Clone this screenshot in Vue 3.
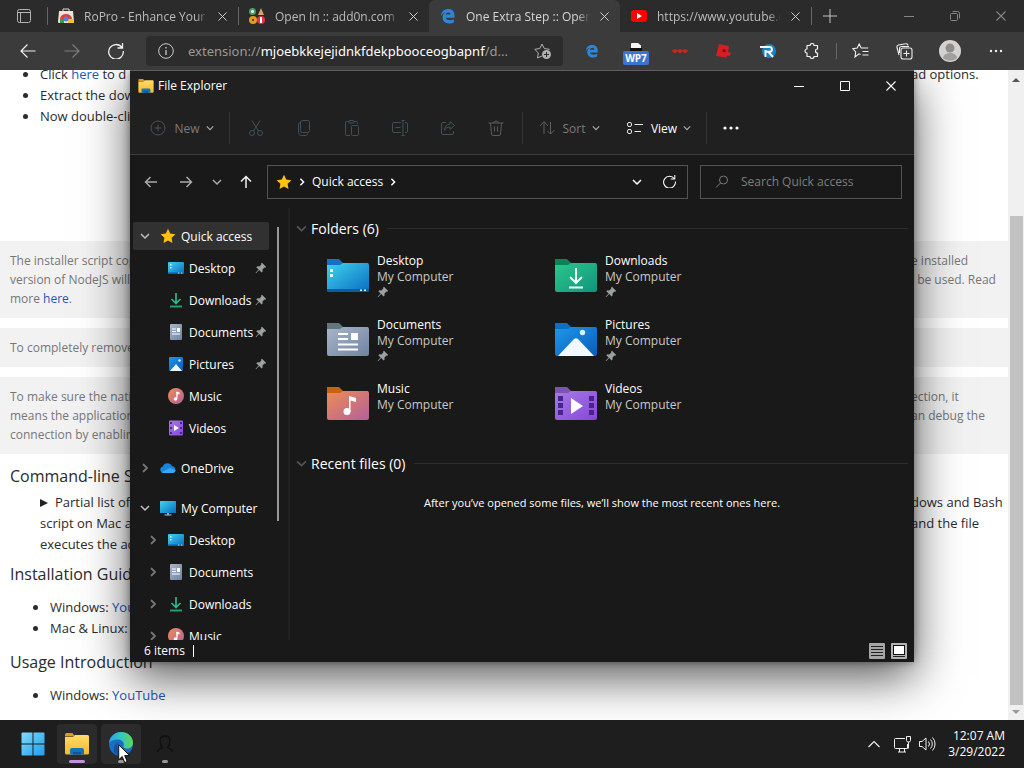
<template>
	<div class="desktop">
		<svg class="sprite" aria-hidden="true">
			<defs>
				<linearGradient id="g-desk" x1="0" y1="0" x2="1" y2="1">
					<stop offset="0" stop-color="#3fd4f0" />
					<stop offset="1" stop-color="#0a6cc0" />
				</linearGradient>
				<linearGradient id="g-down" x1="0" y1="0" x2="1" y2="1">
					<stop offset="0" stop-color="#2cc78c" />
					<stop offset="1" stop-color="#10937c" />
				</linearGradient>
				<linearGradient id="g-doc" x1="0" y1="0" x2="1" y2="1">
					<stop offset="0" stop-color="#a9b6c9" />
					<stop offset="1" stop-color="#6f83a3" />
				</linearGradient>
				<linearGradient id="g-pic" x1="0" y1="0" x2="1" y2="1">
					<stop offset="0" stop-color="#1e97ea" />
					<stop offset="1" stop-color="#0b5bb8" />
				</linearGradient>
				<linearGradient id="g-music" x1="0" y1="0" x2="1" y2="1">
					<stop offset="0" stop-color="#f08c55" />
					<stop offset="1" stop-color="#b0619a" />
				</linearGradient>
				<linearGradient id="g-video" x1="0" y1="0" x2="1" y2="1">
					<stop offset="0" stop-color="#a67be6" />
					<stop offset="1" stop-color="#8746d8" />
				</linearGradient>
				<linearGradient id="g-win" x1="0" y1="0" x2="1" y2="1">
					<stop offset="0" stop-color="#7fdcfb" />
					<stop offset="1" stop-color="#1f9cec" />
				</linearGradient>
				<linearGradient id="g-edge" x1="0" y1="0" x2="1" y2="0">
					<stop offset="0" stop-color="#2aa5e4" />
					<stop offset="0.5" stop-color="#35c4c4" />
					<stop offset="1" stop-color="#62d84e" />
				</linearGradient>
				<linearGradient id="g-folder" x1="0" y1="0" x2="0" y2="1">
					<stop offset="0" stop-color="#ffdc68" />
					<stop offset="1" stop-color="#f5b92c" />
				</linearGradient>
			</defs>

			<symbol id="s-desktop" viewBox="0 0 16 16">
				<rect y="2" width="16" height="12" rx="1" fill="url(#g-desk)" />
				<path d="M2 4h1.500v1.500H2zM2 7h1.500v1.500H2z" fill="#d8f7ff" />
				<path d="M0 12.500h16V13a1 1 0 0 1-1 1H1a1 1 0 0 1-1-1z" fill="#0a5ca8" />
				<path d="M10 12.500h1.500v1H10zM13 12.500h1.500v1H13z" fill="#a9e6ff" />
			</symbol>
			<symbol id="s-downloads" viewBox="0 0 16 16">
				<path d="M8 1v10M3.500 7 8 11.500 12.500 7" fill="none" stroke="#2fb68e" stroke-width="1.700" />
				<path d="M2 14.500h12" stroke="#1f9f6e" stroke-width="2" />
			</symbol>
			<symbol id="s-documents" viewBox="0 0 16 16">
				<rect x="2" width="12" height="16" rx="1" fill="url(#g-doc)" />
				<path d="M4 5h4M4 7.500h4M4 10h8" stroke="#fff" stroke-width="1.200" />
				<path d="M9 4h3v4H9z" fill="#fff" />
			</symbol>
			<symbol id="s-pictures" viewBox="0 0 16 16">
				<rect x="1" y="1" width="14" height="14" rx="1" fill="url(#g-pic)" />
				<path d="M2 15l6-7 6 7z" fill="#f4faff" />
				<circle cx="11.500" cy="4.500" r="1.200" fill="#d6f0ff" />
			</symbol>
			<symbol id="s-music" viewBox="0 0 16 16">
				<circle cx="8" cy="8" r="8" fill="url(#g-music)" />
				<path d="M8.500 3.500l3 1v2l-2-.7v5" fill="#fff" />
				<path d="M8.800 4v7" stroke="#fff" stroke-width="1" />
				<circle cx="7.500" cy="11" r="1.800" fill="#fff" />
			</symbol>
			<symbol id="s-videos" viewBox="0 0 16 16">
				<rect x="1" y="0.500" width="14" height="15" rx="1" fill="url(#g-video)" />
				<path d="M2 2h2v2H2zM2 7h2v2H2zM2 12h2v2H2zM12 2h2v2h-2zM12 7h2v2h-2zM12 12h2v2h-2z" fill="#4a2796" />
				<path d="M6 5l5 3-5 3z" fill="#fff" />
			</symbol>
			<symbol id="s-star" viewBox="0 0 16 16">
				<path d="M8 .8l2.200 4.700 5.200.7-3.800 3.600.9 5.200L8 12.500 3.500 15l.9-5.200L.6 6.200l5.200-.7z" fill="#ffc20d" />
			</symbol>
			<symbol id="s-cloud" viewBox="0 0 16 16">
				<path d="M3.500 13a3.300 3.300 0 0 1-.7-6.500A5 5 0 0 1 12 6.300 3.400 3.400 0 0 1 12.700 13z" fill="#1a84dd" />
				<path d="M1.500 12.300 10 8l5.800 2.500A3.200 3.200 0 0 1 12.700 13H3.500a3 3 0 0 1-2-.7z" fill="#36a9f2" />
			</symbol>
			<symbol id="s-computer" viewBox="0 0 16 16">
				<rect y="1" width="16" height="12" rx="0.500" fill="url(#g-desk)" />
				<path d="M7 13h2v2H7z" fill="#6aaecb" />
				<path d="M4.500 15h7" stroke="#a9cbd8" stroke-width="1" />
			</symbol>
			<symbol id="s-pin" viewBox="0 0 12 12">
				<path d="M7 .8 11.200 5l-1 .8-.7-.2-2 2 .1 1.900-1 1L4.200 8 1 11.200.6 10.800 3.700 7.600 1.300 5.200l1-1 2 .2 2-2L6 1.700z" fill="#9aa0a4" />
			</symbol>
			<symbol id="s-down" viewBox="0 0 10 10">
				<path d="M1 3l4 4 4-4" fill="none" stroke="currentColor" stroke-width="1.500" />
			</symbol>
			<symbol id="s-right" viewBox="0 0 10 10">
				<path d="M3 1l4 4-4 4" fill="none" stroke="currentColor" stroke-width="1.800" />
			</symbol>
			<symbol id="s-close" viewBox="0 0 10 10">
				<path d="M0.500 0.500l9 9M9.500 0.500l-9 9" fill="none" stroke="currentColor" stroke-width="1.100" />
			</symbol>
			<symbol id="s-arrow" viewBox="0 0 16 16">
				<path d="M15.500 8H1M7.500 1.500 1 8l6.500 6.500" fill="none" stroke="currentColor" stroke-width="1.200" />
			</symbol>
			<symbol id="s-back" viewBox="0 0 14 14">
				<path d="M13 7H1.500M6.500 2l-5 5 5 5" fill="none" stroke="currentColor" stroke-width="1.500" />
			</symbol>
			<symbol id="s-reload" viewBox="0 0 16 16">
				<path d="M14 4.600A7.300 7.300 0 1 0 15.300 8M14.500 0v5H9.500" fill="none" stroke="currentColor" stroke-width="1.300" />
			</symbol>
			<symbol id="s-ie" viewBox="0 0 16 16">
				<path
					d="M1 8.500C1.200 3 4.500 1 8.200 1c4 0 6.300 2.700 6.300 6.300v2.400H5.800c.3 1.700 2 2.500 4.100 2.500 1.600 0 2.900-.4 4-1v3.200c-1.300.7-2.900 1-4.600 1-3.900 0-6.700-2.200-6.700-6 0-2.300 1.100-4.200 3-5.200C3.300 4.500 1.800 6.200 1 8.500zm4.800-1.900h4.900c0-1.500-1-2.200-2.300-2.200s-2.400.9-2.600 2.200z"
					fill="#2f86d8"
				/>
			</symbol>

			<symbol id="f-desktop" viewBox="0 0 43 36">
				<path d="M1 2h12l4 4h25v10H1z" fill="#1272c6" />
				<path d="M1 8h13l3-2h24a2 2 0 0 1 2 2v25a2 2 0 0 1-2 2H3a2 2 0 0 1-2-2z" fill="url(#g-desk)" />
				<path d="M1 32h42v1a2 2 0 0 1-2 2H3a2 2 0 0 1-2-2z" fill="#0b5ba5" />
				<path d="M4 12h3v3H4zM4 17h3v3H4zM34 32.500h2v1.500h-2zM38 32.500h2v1.500h-2z" fill="#e4faff" />
			</symbol>
			<symbol id="f-downloads" viewBox="0 0 43 36">
				<path d="M1 2h12l4 4h25v10H1z" fill="#0c8256" />
				<path d="M1 8h13l3-2h24a2 2 0 0 1 2 2v25a2 2 0 0 1-2 2H3a2 2 0 0 1-2-2z" fill="url(#g-down)" />
				<path d="M22 11v14M16 20l6 6 6-6M15 30.500h14" fill="none" stroke="#e9fff6" stroke-width="2" />
			</symbol>
			<symbol id="f-documents" viewBox="0 0 43 36">
				<path d="M1 2h12l4 4h25v10H1z" fill="#65757e" />
				<path d="M1 8h13l3-2h24a2 2 0 0 1 2 2v25a2 2 0 0 1-2 2H3a2 2 0 0 1-2-2z" fill="url(#g-doc)" />
				<path d="M12 13h10M12 18h10M12 23.500h20M12 28.500h20" stroke="#fff" stroke-width="2" />
				<path d="M25 12h7v7h-7z" fill="#fff" />
			</symbol>
			<symbol id="f-pictures" viewBox="0 0 43 36">
				<path d="M1 2h12l4 4h25v10H1z" fill="#0b6fc4" />
				<path d="M1 8h13l3-2h24a2 2 0 0 1 2 2v25a2 2 0 0 1-2 2H3a2 2 0 0 1-2-2z" fill="url(#g-pic)" />
				<path d="M4 35 20 18q2-1.500 4 0l16 17z" fill="#f2f8ff" />
				<circle cx="28.500" cy="11.500" r="2.700" fill="#d9f1ff" />
			</symbol>
			<symbol id="f-music" viewBox="0 0 43 36">
				<path d="M1 2h12l4 4h25v10H1z" fill="#c8620f" />
				<path d="M1 8h13l3-2h24a2 2 0 0 1 2 2v25a2 2 0 0 1-2 2H3a2 2 0 0 1-2-2z" fill="url(#g-music)" />
				<path d="M23 11l7 2v4l-5.500-1.500V27H23z" fill="#fff" />
				<circle cx="21" cy="26.500" r="3.500" fill="#fff" />
			</symbol>
			<symbol id="f-videos" viewBox="0 0 43 36">
				<path d="M1 2h12l4 4h25v10H1z" fill="#7a55b5" />
				<path d="M1 8h13l3-2h24a2 2 0 0 1 2 2v25a2 2 0 0 1-2 2H3a2 2 0 0 1-2-2z" fill="url(#g-video)" />
				<path
					d="M4 11h5v5H4zM4 18h5v5H4zM4 25h5v5H4zM35 11h5v5h-5zM35 18h5v5h-5zM35 25h5v5h-5z"
					fill="#462488"
				/>
				<path d="M17 13l12 8-12 8z" fill="#fff" />
			</symbol>
			<symbol id="s-explorer" viewBox="0 0 24 22">
				<path d="M0 1.500A1.500 1.500 0 0 1 1.500 0h6L10 3.500H0z" fill="#d99a1e" />
				<path d="M0 4h8l2-2h12.500A1.500 1.500 0 0 1 24 3.500V20a1.500 1.500 0 0 1-1.500 1.500h-21A1.500 1.500 0 0 1 0 20z" fill="url(#g-folder)" />
				<path d="M5 21.500V17a2 2 0 0 1 2-2h10a2 2 0 0 1 2 2v4.500z" fill="#1573be" />
				<path d="M8 19h8v2.500H8z" fill="#0d5593" />
			</symbol>
		</svg>

		<header class="browser">
			<div class="tabs">
				<button class="tab-menu" aria-label="Tab actions">
					<svg width="14" height="14" viewBox="0 0 14 14" fill="none" stroke="#b5b5b5">
						<rect x="0.500" y="0.500" width="13" height="13" rx="2" />
						<path d="M0.500 3.500h13M3.500 3.500v10" />
					</svg>
				</button>
				<div v-for="tab in tabs" :key="tab.title" class="tab" :class="{ active: tab.active }">
					<svg v-if="tab.icon === 'store'" class="favicon" viewBox="0 0 16 16">
						<path d="M5 3V1h6v2" fill="none" stroke="#ddd" />
						<path d="M1 3h14l1 11a1 1 0 0 1-1 1H1a1 1 0 0 1-1-1z" fill="#e9e4df" />
						<path d="M2 11a6 5 0 0 1 12 0z" fill="#d9443a" />
						<path d="M10 11h6v4h-6z" fill="#f2c230" />
						<path d="M2 11h4v4H2z" fill="#3e9a4c" />
						<circle cx="8" cy="11" r="2.500" fill="#4a86e0" />
					</svg>
					<svg v-else-if="tab.icon === 'add0n'" class="favicon" viewBox="0 0 16 16">
						<circle cx="3.500" cy="3.500" r="2.500" fill="#fff" stroke="#4a9f6b" stroke-width="2" />
						<path d="M12 0l3 7H9z" fill="#d8a36a" />
						<circle cx="4" cy="12" r="2.500" fill="none" stroke="#e89a20" stroke-width="3" />
						<circle cx="12" cy="12" r="4" fill="#e23440" />
						<path d="M12 9v6" stroke="#fff" stroke-width="2" />
					</svg>
					<svg v-else-if="tab.icon === 'ie'" class="favicon"><use href="#s-ie" /></svg>
					<svg v-else class="favicon" viewBox="0 0 16 16">
						<rect y="2" width="16" height="12" rx="3" fill="#f00" />
						<path d="M6 5l5 3-5 3z" fill="#fff" />
					</svg>
					<span class="tab-title">{{ tab.title }}</span>
					<button class="tab-close" aria-label="Close tab">
						<svg width="9" height="9"><use href="#s-close" /></svg>
					</button>
				</div>
				<button class="new-tab" aria-label="New tab">
					<svg width="14" height="14" viewBox="0 0 14 14"><path d="M7 0v14M0 7h14" stroke="#c4c4c4" /></svg>
				</button>
				<div class="browser-controls">
					<button aria-label="Minimize browser">
						<svg width="10" height="10" viewBox="0 0 10 10"><path d="M0 5.500h10" stroke="currentColor" /></svg>
					</button>
					<button aria-label="Restore browser">
						<svg width="10" height="10" viewBox="0 0 10 10" fill="none" stroke="currentColor">
							<rect x="0.500" y="2.500" width="7" height="7" rx="1" />
							<path d="M2.500.5h5a2 2 0 0 1 2 2v5" />
						</svg>
					</button>
					<button aria-label="Close browser">
						<svg width="10" height="10"><use href="#s-close" /></svg>
					</button>
				</div>
			</div>

			<div class="toolbar">
				<button aria-label="Back"><svg width="16" height="16"><use href="#s-arrow" /></svg></button>
				<button class="dim" aria-label="Forward">
					<svg class="flip" width="16" height="16"><use href="#s-arrow" /></svg>
				</button>
				<button aria-label="Refresh"><svg width="16" height="16"><use href="#s-reload" /></svg></button>
				<div class="address">
					<svg width="16" height="16" viewBox="0 0 16 16" fill="none" stroke="#c9c9c9">
						<circle cx="8" cy="8" r="7.300" />
						<path d="M8 7v5M8 4v1.500" stroke-width="1.300" />
					</svg>
					<span class="url">extension://<b>mjoebkkejejidnkfdekpbooceogbapnf</b>/d...</span>
					<button class="add-fav" aria-label="Add to favorites">
						<svg width="18" height="18" viewBox="0 0 18 18" fill="none" stroke="#b0b0b0">
							<path d="M8 14l-4.500 2 .8-5L.8 7.300l5-.8L8 2l2.300 4.500 5 .8-1 1" />
							<circle cx="12.500" cy="12.500" r="4.500" fill="#b0b0b0" stroke="none" />
							<path d="M12.500 10v5M10 12.500h5" stroke="#2b2b2b" />
						</svg>
					</button>
				</div>
				<button aria-label="Open in IE"><svg width="14" height="14"><use href="#s-ie" /></svg></button>
				<button class="wp" aria-label="WP7 extension">
					<svg width="14" height="8" viewBox="0 0 14 8">
						<path d="M2 5V1a1 1 0 0 1 1-1h6l3 2.500V5z" fill="#f4f4f4" />
						<path d="M1 5h12v3H1z" fill="#111" />
					</svg>
					<span class="badge">WP7</span>
				</button>
				<button aria-label="Dots extension">
					<svg width="16" height="6" viewBox="0 0 16 6">
						<path d="M0 3h16" stroke="#b32018" stroke-width="2" />
						<circle cx="3" cy="3" r="2" fill="#c5281c" />
						<circle cx="8" cy="3" r="2" fill="#c5281c" />
						<circle cx="13" cy="3" r="2" fill="#c5281c" />
					</svg>
				</button>
				<button aria-label="Roblox extension">
					<svg width="16" height="16" viewBox="0 0 16 16">
						<path d="M3 1l10 2-.8 6 3 1-1.700 3-2.500-.6-.5 2L0 13z" fill="#d81e24" />
						<path d="M7 6l3 .7-.6 2.600-3-.6z" fill="#7c1014" />
					</svg>
				</button>
				<button aria-label="RoPro extension">
					<svg width="16" height="16" viewBox="0 0 16 16">
						<circle cx="9" cy="8" r="7" fill="#1583c9" />
						<path d="M0 4h9.500a2.400 2.400 0 0 1 0 4.800H6M5.500 7v7M8.500 9l4.500 5" fill="none" stroke="#f4f4f4" stroke-width="2" />
					</svg>
				</button>
				<button aria-label="Extensions">
					<svg width="16" height="16" viewBox="0 0 16 16" fill="none" stroke="currentColor" stroke-width="1.200">
						<path
							d="M3 2.500h3a2 2 0 0 1 4 0h3.500V6a2 2 0 0 0 0 4v3.500H10a2 2 0 0 1-4 0H3V10a2 2 0 0 1 0-4z"
							stroke-linejoin="round"
						/>
					</svg>
				</button>
				<i class="tool-sep"></i>
				<button aria-label="Favorites">
					<svg width="17" height="16" viewBox="0 0 17 16" fill="none" stroke="currentColor" stroke-width="1.100">
						<path d="M8.500 11.500l-1.500-.7L3 14l.7-5L.8 5.700l4.400-.6L7.200 1l2 4h7M10.500 8.500h6M10.500 12h6" />
					</svg>
				</button>
				<button aria-label="Collections">
					<svg width="17" height="17" viewBox="0 0 17 17" fill="none" stroke="currentColor" stroke-width="1.100">
						<rect x="5" y="5" width="11" height="11" rx="2" />
						<path d="M10.500 7.500v6M7.500 10.500h6M3 12L1 4.500A2 2 0 0 1 2.500 2l7-1.200A2 2 0 0 1 12 2.500M3.500 10V5.500a2 2 0 0 1 2-2H13" />
					</svg>
				</button>
				<button class="profile" aria-label="Profile">
					<svg width="22" height="22" viewBox="0 0 22 22">
						<circle cx="11" cy="11" r="11" fill="#d4d2d0" />
						<circle cx="11" cy="8" r="4.500" fill="#8f8d8b" />
						<path d="M4 18a7 5 0 0 1 14 0 10 10 0 0 1-14 0z" fill="#a19f9d" />
					</svg>
				</button>
				<button aria-label="Settings and more">
					<svg width="14" height="4" viewBox="0 0 14 4" fill="currentColor">
						<circle cx="2" cy="2" r="1.200" /><circle cx="7" cy="2" r="1.200" /><circle cx="12" cy="2" r="1.200" />
					</svg>
				</button>
			</div>
		</header>

		<main class="viewport">
			<article class="page">
				<ul class="steps">
					<li><span>Click <a href="#">here</a> to d</span><span>ad options.</span></li>
					<li><span>Extract the dow</span></li>
					<li><span>Now double-cli</span></li>
				</ul>
				<div v-for="(note, n) in notes" :key="n" class="note">
					<p v-for="(line, i) in note" :key="i" class="line">
						<span>{{ line.left }}<a v-if="line.link" href="#">{{ line.link }}</a>{{ line.link ? '.' : '' }}</span>
						<span>{{ line.right }}</span>
					</p>
				</div>
				<h2 class="first">Command-line S</h2>
				<div class="details">
					<p class="line"><span><i class="marker"></i>Partial list of</span><span>dows and Bash</span></p>
					<p class="line"><span>script on Mac a</span><span>and the file</span></p>
					<p class="line"><span>executes the ac</span></p>
				</div>
				<h2>Installation Guid</h2>
				<ul class="videos">
					<li><span>Windows: <a href="#">You</a></span></li>
					<li><span>Mac &amp; Linux:</span></li>
				</ul>
				<h2 class="usage">Usage Introduction</h2>
				<ul class="videos">
					<li><span>Windows: <a href="#">YouTube</a></span></li>
				</ul>
			</article>
			<div class="scrollbar">
				<i class="up"></i>
				<i class="thumb"></i>
				<i class="dn"></i>
			</div>

			<section class="explorer" aria-label="File Explorer">
				<div class="titlebar">
					<svg width="16" height="14"><use href="#s-explorer" /></svg>
					<h1>File Explorer</h1>
					<div class="win-controls">
						<button aria-label="Minimize">
							<svg width="10" height="10" viewBox="0 0 10 10"><path d="M0 5.500h10" stroke="currentColor" /></svg>
						</button>
						<button aria-label="Maximize">
							<svg width="10" height="10" viewBox="0 0 10 10"><path d="M.5.500h9v9h-9z" fill="none" stroke="currentColor" /></svg>
						</button>
						<button aria-label="Close"><svg width="10" height="10"><use href="#s-close" /></svg></button>
					</div>
				</div>

				<div class="commands">
					<button class="cmd new">
						<svg width="16" height="16" viewBox="0 0 16 16" fill="none" stroke="#45525c">
							<circle cx="8" cy="8" r="7" />
							<path d="M8 4.500v7M4.500 8h7" />
						</svg>
						New
						<svg class="chev" width="8" height="8"><use href="#s-down" /></svg>
					</button>
					<i class="cmd-sep"></i>
					<button class="tool" aria-label="Cut">
						<svg width="16" height="16" viewBox="0 0 16 16">
							<path d="M4 .5l6.500 10.500M12 .5 5.500 11" />
							<circle cx="4" cy="13" r="2.500" /><circle cx="12" cy="13" r="2.500" />
						</svg>
					</button>
					<button class="tool" aria-label="Copy">
						<svg width="16" height="16" viewBox="0 0 16 16">
							<rect x="4.500" y=".5" width="9" height="12" rx="2" />
							<path d="M4.500 2.500a2 2 0 0 0-2 2v8a3 3 0 0 0 3 3h4a2 2 0 0 0 2-2" />
						</svg>
					</button>
					<button class="tool" aria-label="Paste">
						<svg width="16" height="16" viewBox="0 0 16 16">
							<path d="M6 15.500H2.500a1 1 0 0 1-1-1v-12a1 1 0 0 1 1-1H5M10 1.500h2.500a1 1 0 0 1 1 1V4" />
							<rect x="5" y=".5" width="5" height="2.500" rx="1" />
							<rect x="7.500" y="5.500" width="7" height="10" rx="1" />
						</svg>
					</button>
					<button class="tool" aria-label="Rename">
						<svg width="16" height="16" viewBox="0 0 16 16">
							<path d="M9 2.500H2a1.500 1.500 0 0 0-1.500 1.500v7A1.500 1.500 0 0 0 2 12.500h7M13 2.500h1A1.500 1.500 0 0 1 15.500 4v7a1.500 1.500 0 0 1-1.500 1.500h-1M11 .5v15M9.500.5h3M9.500 15.500h3M3.500 7.500h5" />
						</svg>
					</button>
					<button class="tool" aria-label="Share">
						<svg width="16" height="16" viewBox="0 0 16 16">
							<path d="M6 2.500H3A1.500 1.500 0 0 0 1.500 4v9A1.500 1.500 0 0 0 3 14.500h9a1.500 1.500 0 0 0 1.500-1.500v-2M10 1.500l4.500 4-4.500 4V7C7 7 5.500 8.500 4.500 10.500 4.500 7 6.500 4.500 10 4z" />
						</svg>
					</button>
					<button class="tool grey" aria-label="Delete">
						<svg width="16" height="16" viewBox="0 0 16 16">
							<path d="M.5 3h15M5.500 3a2.500 2 0 0 1 5 0M2.500 3l1 11a1.500 1.500 0 0 0 1.500 1.500h6a1.500 1.500 0 0 0 1.500-1.500l1-11M6.500 6.500v5M9.500 6.500v5" />
						</svg>
					</button>
					<i class="cmd-sep"></i>
					<button class="cmd sort">
						<svg width="16" height="16" viewBox="0 0 16 16" fill="none" stroke="#5a5f62">
							<path d="M5 14V2M1 6l4-4.500L9 6M11.500 2v12M8.500 11l3 3 4-4" />
						</svg>
						Sort
						<svg class="chev" width="8" height="8"><use href="#s-down" /></svg>
					</button>
					<button class="cmd view">
						<svg width="16" height="16" viewBox="0 0 16 16" fill="none" stroke="#e8e8e8">
							<rect x=".5" y="2.500" width="4" height="4" rx="1.500" />
							<rect x=".5" y="9.500" width="4" height="4" rx="1.500" />
							<path d="M7.500 4.500H16M7.500 11.500h6.500" />
						</svg>
						View
						<svg class="chev" width="8" height="8"><use href="#s-down" /></svg>
					</button>
					<i class="cmd-sep"></i>
					<button class="more" aria-label="See more">
						<svg width="16" height="4" viewBox="0 0 16 4" fill="currentColor">
							<circle cx="2" cy="2" r="1.600" /><circle cx="8" cy="2" r="1.600" /><circle cx="14" cy="2" r="1.600" />
						</svg>
					</button>
				</div>

				<div class="navrow">
					<button class="go" aria-label="Back"><svg width="14" height="14"><use href="#s-back" /></svg></button>
					<button class="go fwd" aria-label="Forward"><svg width="14" height="14"><use href="#s-back" /></svg></button>
					<button class="go small" aria-label="Recent locations"><svg width="10" height="10"><use href="#s-down" /></svg></button>
					<button class="go up-dir" aria-label="Up"><svg width="14" height="14"><use href="#s-back" /></svg></button>
					<div class="crumbs">
						<svg width="16" height="16"><use href="#s-star" /></svg>
						<svg width="8" height="8"><use href="#s-right" /></svg>
						<a href="#">Quick access</a>
						<svg width="8" height="8"><use href="#s-right" /></svg>
						<button class="history" aria-label="Previous locations"><svg width="10" height="10"><use href="#s-down" /></svg></button>
						<button aria-label="Refresh folder"><svg width="13" height="13"><use href="#s-reload" /></svg></button>
					</div>
					<label class="search">
						<svg width="14" height="14" viewBox="0 0 14 14" fill="none" stroke="#7a7a7a">
							<circle cx="8.500" cy="5" r="4" />
							<path d="M5.500 8 1 12.500" />
						</svg>
						<input type="text" placeholder="Search Quick access" aria-label="Search Quick access" />
					</label>
				</div>

				<div class="body">
					<nav class="tree">
						<button
							v-for="item in tree"
							:key="item.id"
							class="node"
							:class="{ child: item.child, selected: item.selected, spaced: item.spaced }"
						>
							<svg class="twisty" :class="{ open: item.open }">
								<use v-if="item.arrow" :href="'#s-' + item.arrow" />
							</svg>
							<svg class="node-icon"><use :href="'#s-' + item.icon" /></svg>
							<span>{{ item.name }}</span>
							<svg v-if="item.pinned" class="node-pin"><use href="#s-pin" /></svg>
						</button>
						<i class="tree-scroll"></i>
					</nav>

					<div class="files">
						<h2 class="group">
							<svg width="11" height="11"><use href="#s-down" /></svg>
							Folders (6)
						</h2>
						<div class="tiles">
							<a v-for="folder in folders" :key="folder.name" class="tile" href="#">
								<svg class="tile-icon"><use :href="'#f-' + folder.name.toLowerCase()" /></svg>
								<span class="tile-text">
									<span>{{ folder.name }}</span>
									<span class="where">My Computer</span>
									<svg v-if="folder.pinned" class="tile-pin"><use href="#s-pin" /></svg>
								</span>
							</a>
						</div>
						<h2 class="group">
							<svg width="11" height="11"><use href="#s-down" /></svg>
							Recent files (0)
						</h2>
						<p class="empty">After you’ve opened some files, we’ll show the most recent ones here.</p>
					</div>
				</div>

				<footer class="status">
					<span class="count">6 items</span>
					<button aria-label="Details view">
						<svg width="16" height="16" viewBox="0 0 16 16">
							<rect width="16" height="16" rx="1" fill="#a6a6a6" />
							<path d="M2 3.500h12M2 6.500h12M2 9.500h12M2 12.500h12" stroke="#222" />
						</svg>
					</button>
					<button aria-label="Large icons view">
						<svg width="16" height="16" viewBox="0 0 16 16">
							<rect width="16" height="16" rx="1" fill="#b4b4b4" />
							<rect x="2.500" y="2.500" width="11" height="9" fill="#fff" stroke="#111" />
							<path d="M2 13.500h12" stroke="#222" />
						</svg>
					</button>
				</footer>
			</section>
		</main>

		<footer class="taskbar">
			<button class="app" aria-label="Start">
				<svg width="24" height="24" viewBox="0 0 24 24" fill="url(#g-win)">
					<path d="M1.500.5h10v11h-11v-10a1 1 0 0 1 1-1zM12.500.5h10a1 1 0 0 1 1 1v10h-11zM.5 12.500h11v11h-10a1 1 0 0 1-1-1zM12.500 12.500h11v10a1 1 0 0 1-1 1h-10z" />
				</svg>
			</button>
			<button class="app lit focus" aria-label="File Explorer">
				<svg width="24" height="22"><use href="#s-explorer" /></svg>
			</button>
			<button class="app lit running" aria-label="Microsoft Edge">
				<svg width="24" height="24" viewBox="0 0 24 24">
					<circle cx="12" cy="12" r="12" fill="#1a6fc4" />
					<path d="M0 11C1 4 6 0 12 0c7 0 12 5 12 10.500 0 4-3 6-6 6-2.500 0-4-1-3.600-2.200C16 12 14 8 9.500 7.500 5 7.200 1.500 9 0 11z" fill="url(#g-edge)" />
					<path d="M8.500 12c-1 4 2 9 7 9 3 0 5-1 6.500-2.500A12 12 0 0 1 8 23C3 20 4 13 9.500 9.500z" fill="#1450a0" />
				</svg>
				<svg class="pointer" width="13" height="20" viewBox="0 0 13 20">
					<path d="M.7.8v15l3.500-3.300 2.500 6 2.500-1-2.500-5.900h5z" fill="#fff" stroke="#111" />
				</svg>
			</button>
			<button class="app running" aria-label="Roblox account">
				<svg width="16" height="18" viewBox="0 0 18 20" fill="none" stroke="#0f0f0f" stroke-width="1.500">
					<path d="M1 19c0-3 2-4 5-5-3-4-3-7-2-10 1-4 9-4 10 0 1 3 1 6-2 10 3 1 5 2 5 5" />
				</svg>
			</button>
			<div class="tray">
				<button aria-label="Show hidden icons">
					<svg width="12" height="8" viewBox="0 0 12 8"><path d="M.5 7 6 1.500 11.500 7" fill="none" stroke="#eee" stroke-width="1.200" /></svg>
				</button>
				<svg width="17" height="17" viewBox="0 0 17 17" fill="none" stroke="#eee">
					<path d="M11 2.500H1.500a1 1 0 0 0-1 1v8a1 1 0 0 0 1 1h12V8M4 16h8M5.500 12.500V16M10.500 12.500V16" />
					<path d="M12.500.5h4v4l-1 1.500h-2l-1-1.500zM14.500 6v6.500" />
				</svg>
				<svg width="17" height="16" viewBox="0 0 17 16" fill="none" stroke="#eee">
					<path d="M.5 5.500v5H3l4 3.500V2L3 5.500zM9.500 5.500a4 4 0 0 1 0 5M11.500 3.500a6.500 6.500 0 0 1 0 9M13.500 1.500a9.500 9.500 0 0 1 0 13" />
				</svg>
				<time class="clock"><span>12:07 AM</span><span>3/29/2022</span></time>
			</div>
		</footer>
	</div>
</template>

<script setup>
import { ref } from 'vue'

const tabs = ref([
	{ title: 'RoPro - Enhance Your Roblox', icon: 'store' },
	{ title: 'Open In :: add0n.com', icon: 'add0n' },
	{ title: 'One Extra Step :: Open In', icon: 'ie', active: true },
	{ title: 'https://www.youtube.com', icon: 'youtube' },
])

const notes = ref([
	[
		{ left: 'The installer script cop', right: 'e installed' },
		{ left: 'version of NodeJS will', right: 'l be used. Read' },
		{ left: 'more ', link: 'here' },
	],
	[{ left: 'To completely remove' }],
	[
		{ left: 'To make sure the nati', right: 'ection, it' },
		{ left: 'means the application', right: 'an debug the' },
		{ left: 'connection by enablin' },
	],
])

const tree = ref([
	{ id: 1, name: 'Quick access', icon: 'star', arrow: 'down', open: true, selected: true },
	{ id: 2, name: 'Desktop', icon: 'desktop', child: true, pinned: true },
	{ id: 3, name: 'Downloads', icon: 'downloads', child: true, pinned: true },
	{ id: 4, name: 'Documents', icon: 'documents', child: true, pinned: true },
	{ id: 5, name: 'Pictures', icon: 'pictures', child: true, pinned: true },
	{ id: 6, name: 'Music', icon: 'music', child: true },
	{ id: 7, name: 'Videos', icon: 'videos', child: true },
	{ id: 8, name: 'OneDrive', icon: 'cloud', arrow: 'right', spaced: true },
	{ id: 9, name: 'My Computer', icon: 'computer', arrow: 'down', open: true, spaced: true },
	{ id: 10, name: 'Desktop', icon: 'desktop', arrow: 'right', child: true },
	{ id: 11, name: 'Documents', icon: 'documents', arrow: 'right', child: true },
	{ id: 12, name: 'Downloads', icon: 'downloads', arrow: 'right', child: true },
	{ id: 13, name: 'Music', icon: 'music', arrow: 'right', child: true },
])

const folders = ref([
	{ name: 'Desktop', pinned: true },
	{ name: 'Downloads', pinned: true },
	{ name: 'Documents', pinned: true },
	{ name: 'Pictures', pinned: true },
	{ name: 'Music' },
	{ name: 'Videos' },
])
</script>

<style>
body {
	background: #fff;
	overflow: hidden;
}
</style>

<style scoped>
* {
	box-sizing: border-box;
}
.desktop {
	display: flex;
	flex-direction: column;
	height: 100vh;
	font-family: 'Open Sans', 'Noto Sans', sans-serif;
	font-size: 12px;
	color: #fff;
}
.sprite {
	position: absolute;
	width: 0;
	height: 0;
}
button {
	display: flex;
	align-items: center;
	justify-content: center;
	flex-shrink: 0;
	padding: 0;
	border: none;
	background: none;
	color: inherit;
	font: inherit;
}
svg {
	flex-shrink: 0;
}
a {
	text-decoration: none;
}
h1,
h2,
p,
ul {
	margin: 0;
	padding: 0;
	font-weight: 400;
}

/* browser */
.browser {
	flex-shrink: 0;
}
.tabs {
	display: flex;
	height: 32px;
	background: #2b2b2b;
}
.tab-menu {
	width: 47px;
}
.tab {
	display: flex;
	align-items: center;
	flex: 0 1 191px;
	min-width: 0;
	padding: 0 11px;
	gap: 10px;
	color: #bcbcbc;
	background: linear-gradient(#666, #666) left center / 1px 18px no-repeat;
}
.tab.active {
	background: #3b3b3b;
	border-radius: 6px 6px 0 0;
	color: #d5d5d5;
}
.tab.active + .tab {
	background: none;
}
.favicon {
	width: 16px;
	height: 16px;
}
.tab-title {
	flex: 1;
	overflow: hidden;
	white-space: nowrap;
	mask-image: linear-gradient(90deg, #000 90%, transparent);
}
.tab-close {
	width: 9px;
	color: #d0d0d0;
}
.new-tab {
	width: 38px;
	background: linear-gradient(#666, #666) left center / 1px 18px no-repeat;
}
.browser-controls {
	display: flex;
	margin-left: auto;
	color: #858585;
}
.browser-controls button {
	width: 46px;
}
.toolbar {
	display: flex;
	align-items: center;
	height: 38px;
	padding: 0 6px;
	background: #3b3b3b;
	color: #f0f0f0;
}
.toolbar > button {
	width: 44px;
	height: 30px;
}
.toolbar .profile {
	width: 48px;
}
.dim {
	color: #7c7c7c;
}
.flip {
	transform: scaleX(-1);
}
.address {
	display: flex;
	align-items: center;
	flex: 1;
	min-width: 0;
	height: 30px;
	margin: 0 7px 0 8px;
	padding: 0 11px 0 12px;
	gap: 14px;
	border-radius: 4px;
	background: #2c2c2c;
	font-family: 'Noto Sans', sans-serif;
	font-size: 13px;
}
.url {
	flex: 1;
	overflow: hidden;
	white-space: nowrap;
	color: #999;
}
.url b {
	font-weight: 400;
	color: #fff;
}
.toolbar .wp {
	flex-direction: column;
	padding-top: 6px;
}
.badge {
	padding: 0 2px;
	border-radius: 2px;
	background: #3d74d0;
	color: #fff;
	font-size: 10px;
	font-weight: 700;
	line-height: 14px;
}
.tool-sep {
	width: 1px;
	height: 16px;
	margin: 0 1px 0 2px;
	background: #666;
}

/* page */
.viewport {
	position: relative;
	display: flex;
	flex: 1;
	min-height: 0;
	overflow: hidden;
	background: #fff;
}
.page {
	flex: 1;
	min-width: 0;
	overflow: hidden;
	color: #2b2b2b;
	font-size: 13px;
	line-height: 21px;
	white-space: nowrap;
}
.page a {
	color: #2458b8;
}
.page li,
.line {
	display: grid;
	grid-template-columns: 1fr 97px;
}
.steps {
	margin: -6px 0 114px;
}
.page li::before {
	content: '';
	grid-row: 1;
	grid-column: 1;
	width: 5px;
	height: 5px;
	margin: 8px 0 0 23px;
	border-radius: 50%;
	background: #2b2b2b;
}
.page li > span:first-child {
	grid-row: 1;
	grid-column: 1;
	padding-left: 40px;
}
.page .videos li > span:first-child {
	padding-left: 50px;
}
.videos li::before {
	margin-left: 33px;
}
.note {
	margin-bottom: 10px;
	padding: 10px 0 10px 10px;
	background: #f2f2f2;
	color: #777;
	font-size: 12px;
	line-height: 19px;
}
.page h2 {
	padding: 7px 0 11px 10px;
	font-size: 16px;
	line-height: 24px;
}
.page .first {
	padding: 0 0 4px 10px;
}
.page .usage {
	padding-top: 11px;
}
.details {
	padding-left: 40px;
}
.marker {
	display: inline-block;
	margin-right: 7px;
	border: solid transparent;
	border-width: 4px 0 4px 8px;
	border-left-color: #222;
}
.scrollbar {
	display: flex;
	flex-direction: column;
	align-items: center;
	width: 16px;
	padding: 8px 0 6px;
	background: #f0f0f0;
}
.up,
.dn {
	border: 4px solid transparent;
	border-top-width: 0;
	border-bottom-color: #555;
}
.thumb {
	flex: 1;
	width: 13px;
	margin: 134px 0 5px;
	background: #c1c1c1;
}
.dn {
	border-width: 4px 4px 0;
	border-top-color: #999;
}

/* explorer window */
.explorer {
	position: absolute;
	inset: 0 110px 58px 130px;
	display: flex;
	flex-direction: column;
	border-top: 1px solid #5e5e5e;
	background: #191919;
	box-shadow: 0 16px 44px rgba(0, 0, 0, 0.65), 0 0 8px rgba(0, 0, 0, 0.4);
}
.titlebar {
	display: flex;
	align-items: center;
	height: 29px;
	padding-left: 8px;
	gap: 4px;
	background: #202020;
}
.titlebar h1 {
	font-size: 12px;
}
.win-controls {
	display: flex;
	margin-left: auto;
}
.win-controls button {
	width: 46px;
	height: 29px;
}
.commands {
	display: flex;
	align-items: center;
	height: 55px;
	padding: 2px 0 0 20px;
	border-bottom: 1px solid #3a3a3a;
	background: #202020;
}
.cmd {
	gap: 8px;
	color: #7b7b7b;
}
.cmd .chev {
	margin-left: -2px;
	color: #aaa;
}
.new {
	width: 64px;
}
.cmd-sep {
	width: 1px;
	height: 32px;
	margin-left: 15px;
	background: #333;
}
.tool {
	width: 48px;
}
.tool svg {
	fill: none;
	stroke: #40505a;
}
.tool.grey svg {
	stroke: #5c5c5c;
}
.tool:nth-of-type(2) {
	margin-left: 2px;
}
.tool + .cmd-sep {
	margin-left: 2px;
}
.sort {
	width: 60px;
	margin-left: 16px;
}
.view {
	width: 64px;
	margin-left: 28px;
	color: #fff;
}
.more {
	width: 48px;
}
.navrow {
	display: flex;
	align-items: center;
	height: 53px;
	padding: 0 12px 0 6px;
}
.go {
	width: 30px;
	color: #aaa;
}
.fwd {
	width: 40px;
}
.small {
	width: 22px;
}
.up-dir {
	width: 35px;
	color: #f2f2f2;
}
.fwd svg {
	transform: scaleX(-1);
}
.up-dir svg {
	transform: rotate(90deg);
}
.crumbs {
	display: flex;
	align-items: center;
	flex: 1;
	height: 34px;
	margin: 0 12px 0 4px;
	padding: 0 10px 0 8px;
	gap: 6px;
	border: 1px solid #535353;
}
.crumbs a {
	color: #fff;
}
.crumbs .history {
	width: 24px;
	margin-left: auto;
}
.history + button {
	width: 15px;
	margin-left: 7px;
}
.search {
	display: flex;
	align-items: center;
	width: 202px;
	height: 34px;
	padding: 0 14px;
	gap: 12px;
	border: 1px solid #535353;
}
.search input {
	flex: 1;
	min-width: 0;
	padding: 0;
	border: none;
	outline: none;
	background: none;
	color: #fff;
	font: inherit;
}
.search input::placeholder {
	color: #7d7d7d;
	opacity: 1;
}
.body {
	display: flex;
	flex: 1;
	min-height: 0;
}
.tree {
	position: relative;
	flex: 0 0 160px;
	overflow: hidden;
	padding: 12px 19px 0 3px;
	border-right: 2px solid #222;
}
.node {
	width: 100%;
	height: 32px;
	padding: 0 2px 0 7px;
	justify-content: flex-start;
}
.node.child {
	padding-left: 15px;
}
.node.spaced {
	margin-top: 8px;
}
.node.selected {
	height: 28px;
	margin: 2px 0;
	border-radius: 2px;
	background: #313131;
}
.twisty {
	width: 10px;
	height: 10px;
	margin-right: 10px;
	color: #777;
}
.twisty.open {
	color: #c0c0c0;
}
.node-icon {
	width: 16px;
	height: 16px;
	margin-right: 5px;
}
.node-pin {
	width: 12px;
	height: 12px;
	margin-left: auto;
}
.tree-scroll {
	position: absolute;
	top: 19px;
	right: 9px;
	width: 2px;
	height: 294px;
	background: #989898;
}
.files {
	flex: 1;
	min-width: 0;
	padding: 10px 6px 0;
}
.group {
	display: flex;
	align-items: center;
	gap: 4px;
	height: 20px;
	font-size: 14px;
}
.group svg {
	color: #555;
}
.group::after {
	content: '';
	flex: 1;
	height: 1px;
	margin-left: 4px;
	background: #2d2d2d;
}
.tiles {
	display: grid;
	grid-template-columns: repeat(2, 228px);
	grid-auto-rows: 64px;
	padding: 15px 0 8px 30px;
}
.tile {
	display: flex;
	gap: 8px;
	color: #fff;
}
.tile-icon {
	width: 43px;
	height: 36px;
	margin-top: 4px;
}
.tile-text {
	display: flex;
	flex-direction: column;
	line-height: 16px;
}
.where {
	color: #c8c8c8;
}
.tile-pin {
	width: 12px;
	height: 12px;
	margin-top: 1px;
}
.empty {
	margin-top: 21px;
	font-size: 11px;
	line-height: 18px;
	text-align: center;
}
.status {
	display: flex;
	align-items: center;
	height: 22px;
	padding: 0 7px 0 14px;
	gap: 6px;
}
.count {
	margin-right: auto;
	padding-right: 8px;
	border-right: 1px solid #fff;
	line-height: 12px;
}

/* taskbar */
.taskbar {
	display: flex;
	align-items: center;
	flex-shrink: 0;
	height: 48px;
	padding: 0 19px 0 13px;
	gap: 4px;
	background: #1e1e1e;
}
.app {
	position: relative;
	width: 40px;
	height: 40px;
	border-radius: 4px;
}
.lit {
	background: #2b2b2b;
}
.running::after,
.focus::after {
	content: '';
	position: absolute;
	bottom: 1px;
	width: 6px;
	height: 3px;
	border-radius: 2px;
	background: #999;
}
.focus::after {
	width: 16px;
	background: #c590dc;
}
.pointer {
	position: absolute;
	left: 17px;
	top: 20px;
	z-index: 1;
}
.tray {
	display: flex;
	align-items: center;
	margin-left: auto;
	gap: 8px;
}
.tray button {
	margin-right: 6px;
}
.clock {
	display: flex;
	flex-direction: column;
	margin-left: 4px;
	line-height: 16px;
	text-align: right;
	font-size: 12px;
}
</style>
